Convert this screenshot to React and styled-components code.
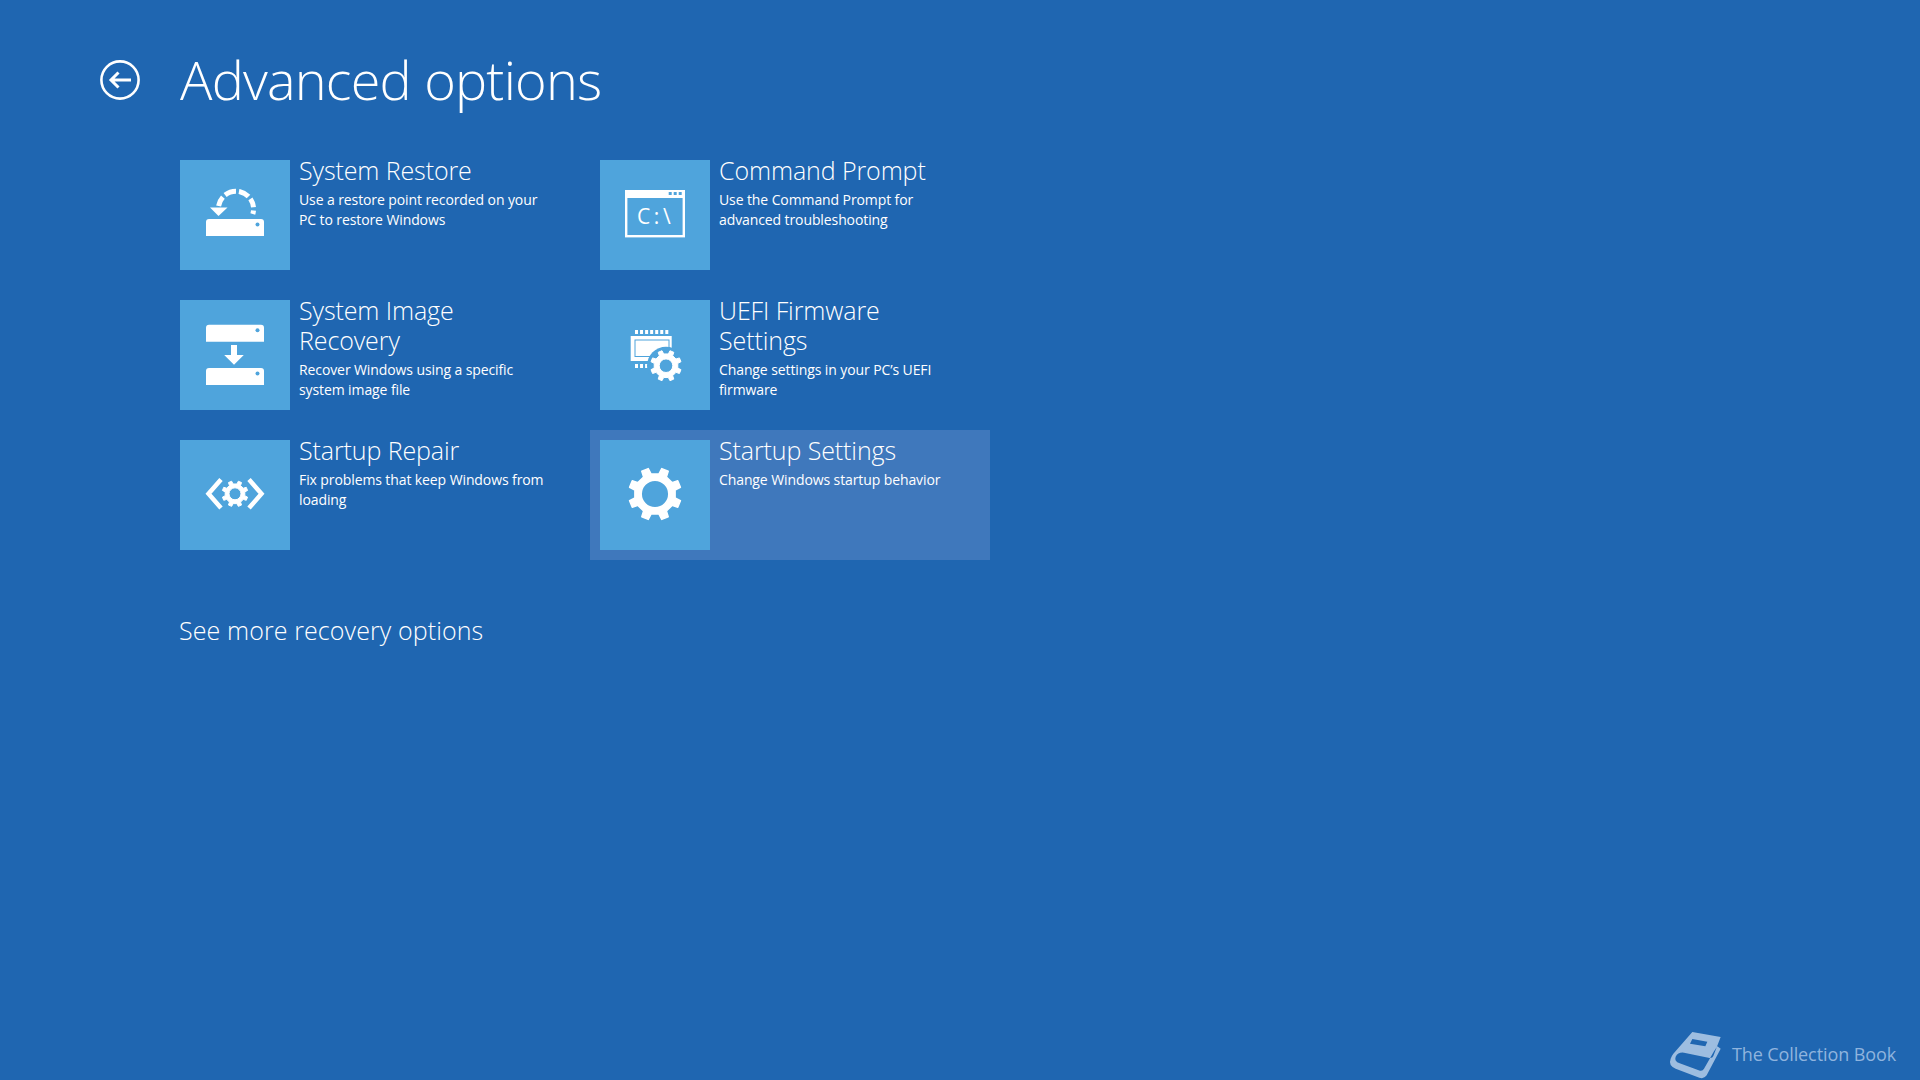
import React from "react";
import styled, { createGlobalStyle } from "styled-components";

const GlobalStyle = createGlobalStyle`
  html, body {
    margin: 0;
    padding: 0;
    background: #1f66b1;
  }
  * {
    box-sizing: border-box;
  }
`;

const Page = styled.div`
  position: relative;
  width: 1920px;
  height: 1080px;
  overflow: hidden;
  background: #1f66b1;
  color: #fff;
  font-family: "Open Sans", "Noto Sans", sans-serif;
  padding: 40px 0 0 100px;
`;

const Header = styled.header`
  display: flex;
  align-items: center;
  gap: 40px;
  height: 80px;
`;

const BackButton = styled.div`
  width: 40px;
  height: 40px;
  flex: none;
  svg {
    display: block;
  }
`;

const Title = styled.h1`
  margin: -2px 0 0;
  font-size: 54px;
  font-weight: 300;
  line-height: 80px;
  letter-spacing: -0.8px;
`;

const Main = styled.main`
  margin: 30px 0 0 70px;
`;

const Grid = styled.div`
  display: grid;
  grid-template-columns: 400px 400px;
  grid-auto-rows: 130px;
  column-gap: 20px;
  row-gap: 10px;
`;

const Item = styled.div`
  display: flex;
  gap: 9px;
  padding: 10px;
  background: ${(p) => (p.$active ? "#3f78bc" : "transparent")};
`;

const Tile = styled.div`
  width: 110px;
  height: 110px;
  flex: none;
  background: #4fa4dc;
  svg {
    display: block;
  }
`;

const ItemText = styled.div`
  width: 247px;
  margin-top: -5px;
`;

const ItemTitle = styled.div`
  font-size: 25px;
  font-weight: 300;
  line-height: 30px;
  letter-spacing: -0.1px;
`;

const ItemDesc = styled.div`
  font-size: 14px;
  font-weight: 400;
  line-height: 20px;
  letter-spacing: -0.1px;
  margin-top: 5px;
`;

const MoreLink = styled.div`
  margin-top: 53px;
  margin-left: 9px;
  font-size: 25px;
  font-weight: 300;
  line-height: 34px;
  letter-spacing: 0.1px;
`;

const Watermark = styled.div`
  position: absolute;
  right: 24px;
  bottom: 0;
  display: flex;
  align-items: center;
  gap: 3px;
  height: 52px;
  color: #8fb4de;
  font-size: 18px;
  letter-spacing: -0.1px;
  svg {
    display: block;
  }
`;

const WatermarkText = styled.span`
  margin-bottom: 1px;
`;

const TILE = "#4fa4dc";

// outline of a cog, teeth drawn as trapezoids round the rim
const gearPath = (cx, cy, outer, root, hole, teeth = 8, offset = Math.PI / 8) => {
  const pts = [];
  const step = (Math.PI * 2) / teeth;
  for (let i = 0; i < teeth; i++) {
    const a = offset + i * step - Math.PI / 2;
    const w = step * 0.25;
    const w2 = step * 0.17;
    pts.push([a - w, root], [a - w2, outer], [a + w2, outer], [a + w, root]);
  }
  const rim = pts
    .map(([a, r], i) => `${i ? "L" : "M"}${(cx + r * Math.cos(a)).toFixed(2)} ${(cy + r * Math.sin(a)).toFixed(2)}`)
    .join(" ");
  return `${rim} Z M${cx - hole} ${cy} a${hole} ${hole} 0 1 0 ${hole * 2} 0 a${hole} ${hole} 0 1 0 ${-hole * 2} 0 Z`;
};

const Icon = ({ children }) => (
  <svg width="110" height="110" viewBox="0 0 110 110">
    {children}
  </svg>
);

const Drive = ({ y, h = 17 }) => (
  <>
    <path d={`M26 ${y + 3} a3 3 0 0 1 3 -3 h52 a3 3 0 0 1 3 3 v${h - 3} h-58 Z`} fill="#fff" />
    <circle cx="77.5" cy={y + 5.5} r="2" fill={TILE} />
  </>
);

const RestoreIcon = () => (
  <Icon>
    <Drive y={59} />
    <path
      d="M38.6 46 A17.6 17.6 0 1 1 72.8 54"
      fill="none"
      stroke="#fff"
      strokeWidth="5"
      strokeDasharray="10 3 11.5 3 11 3 9 3 6 20"
    />
    <path d="M30 47.5 H47.5 L38.5 56 Z" fill="#fff" />
  </Icon>
);

const ImageIcon = () => (
  <Icon>
    <Drive y={24.7} />
    <Drive y={68} />
    <path d="M51 45 H57 V55 H63.8 L54 64.8 L44.2 55 H51 Z" fill="#fff" />
  </Icon>
);

const RepairIcon = () => (
  <Icon>
    <path d="M41 39.5 L28.5 53.8 L41 68" fill="none" stroke="#fff" strokeWidth="4.5" />
    <path d="M69 39.5 L81.5 53.8 L69 68" fill="none" stroke="#fff" strokeWidth="4.5" />
    <path
      d={gearPath(55, 53.8, 13, 10, 6)}
      fill="#fff"
      fillRule="evenodd"
      stroke="#fff"
      strokeWidth="1"
      strokeLinejoin="round"
    />
  </Icon>
);

const CommandIcon = () => (
  <Icon>
    <rect x="26.2" y="31.2" width="57.6" height="45" fill="none" stroke="#fff" strokeWidth="2.4" />
    <rect x="25" y="30" width="60" height="8" fill="#fff" />
    <rect x="68.7" y="32" width="3" height="3" fill={TILE} />
    <rect x="73.7" y="32" width="3" height="3" fill={TILE} />
    <rect x="78.7" y="32" width="3" height="3" fill={TILE} />
    <text
      x="37"
      y="63.5"
      fill="#fff"
      fontFamily="'Open Sans', sans-serif"
      fontSize="21"
      fontWeight="500"
      letterSpacing="3.6"
    >
      C:\
    </text>
  </Icon>
);

const FirmwareIcon = () => (
  <Icon>
    {[0, 1, 2, 3, 4, 5, 6].map((i) => (
      <rect key={i} x={35 + i * 5.05} y="30" width="3" height="4" fill="#fff" />
    ))}
    {[0, 1, 2].map((i) => (
      <rect key={i} x={35 + i * 5.05} y="64" width="3" height="4" fill="#fff" />
    ))}
    <rect x="30.7" y="36" width="41" height="25" fill="#fff" />
    <rect x="35" y="40" width="34" height="16.5" fill="none" stroke={TILE} strokeWidth="1" />
    <circle cx="66" cy="65.7" r="19" fill={TILE} />
    <path
      d={gearPath(66, 65.7, 15.5, 12, 6.8)}
      fill="#fff"
      fillRule="evenodd"
      stroke="#fff"
      strokeWidth="1"
      strokeLinejoin="round"
    />
  </Icon>
);

const SettingsIcon = () => (
  <Icon>
    <path
      d={gearPath(55, 54, 26.3, 20.5, 13.8)}
      fill="#fff"
      fillRule="evenodd"
      stroke="#fff"
      strokeWidth="1.5"
      strokeLinejoin="round"
    />
  </Icon>
);

const BackIcon = () => (
  <svg width="40" height="40" viewBox="0 0 40 40">
    <circle cx="20" cy="20" r="18.6" fill="none" stroke="#fff" strokeWidth="2.6" />
    <path d="M31 20 H11 M18.5 12.5 L11 20 L18.5 27.5" fill="none" stroke="#fff" strokeWidth="3" />
  </svg>
);

const BookIcon = () => (
  <svg width="65" height="52" viewBox="0 0 195 156">
    <path
      d="M85 12 L170 27 L148 84 Q145 92 133 89 L60 74 Q42 72 35 86 Q30 100 47 106 L108 128 Q116 130 120 122 L150 70 L160 55 L170 62 L128 142 Q120 154 106 149 L35 122 Q12 112 20 92 Q22 85 28 77 Z M85 33 L130 41 L124 55 L78 47 Z"
      fill="#9dbde0"
      fillRule="evenodd"
    />
  </svg>
);

const options = [
  {
    title: "System Restore",
    desc: "Use a restore point recorded on your PC to restore Windows",
    icon: <RestoreIcon />,
  },
  {
    title: "Command Prompt",
    desc: "Use the Command Prompt for advanced troubleshooting",
    icon: <CommandIcon />,
  },
  {
    title: "System Image Recovery",
    desc: "Recover Windows using a specific system image file",
    icon: <ImageIcon />,
  },
  {
    title: "UEFI Firmware Settings",
    desc: "Change settings in your PC’s UEFI firmware",
    icon: <FirmwareIcon />,
  },
  {
    title: "Startup Repair",
    desc: "Fix problems that keep Windows from loading",
    icon: <RepairIcon />,
  },
  {
    title: "Startup Settings",
    desc: "Change Windows startup behavior",
    icon: <SettingsIcon />,
    active: true,
  },
];

const App = () => {
  return (
    <>
      <GlobalStyle />
      <Page>
        <Header>
          <BackButton>
            <BackIcon />
          </BackButton>
          <Title>Advanced options</Title>
        </Header>
        <Main>
          <Grid>
            {options.map((o) => (
              <Item key={o.title} $active={o.active}>
                <Tile>{o.icon}</Tile>
                <ItemText>
                  <ItemTitle>{o.title}</ItemTitle>
                  <ItemDesc>{o.desc}</ItemDesc>
                </ItemText>
              </Item>
            ))}
          </Grid>
          <MoreLink>See more recovery options</MoreLink>
        </Main>
        <Watermark>
          <BookIcon />
          <WatermarkText>The Collection Book</WatermarkText>
        </Watermark>
      </Page>
    </>
  );
};

export default App;
